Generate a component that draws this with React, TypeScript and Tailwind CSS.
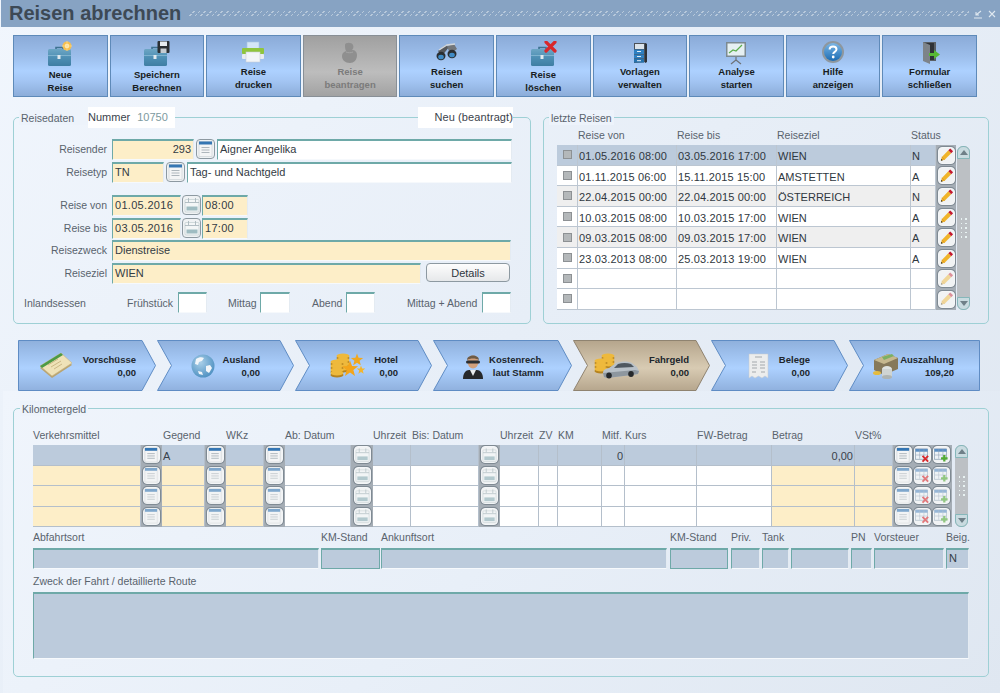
import React from "react";

const btnBg = "bg-[linear-gradient(180deg,#8babd8_0%,#9dbfec_35%,#add1ff_58%,#a3c5f3_75%,#8cadd9_100%)]";

function Case({ children }: { children?: React.ReactNode }) {
  return (
    <svg width="27" height="26" viewBox="0 0 27 26">
      <defs>
        <linearGradient id="cs" x1="0" y1="0" x2="0" y2="1">
          <stop offset="0" stopColor="#6da6c4" />
          <stop offset="0.5" stopColor="#4e8fb4" />
          <stop offset="1" stopColor="#3f7ea3" />
        </linearGradient>
      </defs>
      <path d="M9 9V6.5h7V9" fill="none" stroke="#3e7391" strokeWidth="1.6" />
      <rect x="1" y="8" width="23" height="17" rx="1.5" fill="url(#cs)" />
      <rect x="1" y="14" width="23" height="1" fill="#7fb3cf" />
      <rect x="10.5" y="14" width="3" height="4" fill="#dfe9ee" />
      {children}
    </svg>
  );
}

const NewIcon = () => (
  <Case>
    <circle cx="20" cy="5" r="4.5" fill="#f6bf4f" />
    <circle cx="20" cy="5" r="2.2" fill="#fff1c4" />
    <path d="M20 0v10M15 5h10" stroke="#fbd98a" strokeWidth="0.8" />
  </Case>
);
const SaveIcon = () => (
  <Case>
    <rect x="14.5" y="0" width="12" height="12" rx="1" fill="#2b2f33" />
    <rect x="17" y="0.5" width="7" height="4.5" fill="#e8edf1" />
    <rect x="17.5" y="7.5" width="6" height="4.5" fill="#c6ccd2" />
  </Case>
);
const DeleteIcon = () => (
  <Case>
    <path d="M16 1l9 9M25 1l-9 9" stroke="#d8272b" strokeWidth="3.2" strokeLinecap="round" />
  </Case>
);
const PrinterIcon = () => (
  <svg width="24" height="24" viewBox="0 0 24 24">
    <rect x="6" y="1" width="12" height="8" fill="#d5e6f6" stroke="#a9c5de" strokeWidth="0.6" />
    <rect x="1" y="7" width="22" height="6" rx="1" fill="#8fc53c" />
    <rect x="1" y="13" width="22" height="5" rx="1" fill="#e9edf0" />
    <rect x="5" y="11" width="14" height="10" fill="#f2f5f8" stroke="#c5ced6" strokeWidth="0.6" />
  </svg>
);
const HandIcon = () => (
  <svg width="24" height="24" viewBox="0 0 24 24">
    <path d="M7 4c0-3 7-3 8 0 1 2 0 4-1 5 3 0 5 2 5 5 0 5-3 8-7 8-5 0-8-3-8-7 0-3 2-4 4-5-1-2-1-4-1-6z" fill="#8f8f8f" />
    <path d="M8 11c2 1 5 1 7 0" stroke="#a5a5a5" strokeWidth="1" fill="none" />
  </svg>
);
const BinocularIcon = () => (
  <svg width="24" height="24" viewBox="0 0 24 24">
    <path d="M3 10l8-6 3 2-7 9z" fill="#55585c" />
    <path d="M12 5l7-2 3 5-7 5z" fill="#72767a" />
    <path d="M4 9l8-5 8-1" stroke="#d3d7da" strokeWidth="1.3" fill="none" />
    <ellipse cx="6" cy="15" rx="4.500" ry="4.200" fill="#2b2e31" />
    <ellipse cx="6" cy="16" rx="2.800" ry="2.300" fill="#3f8bc6" />
    <ellipse cx="17" cy="13" rx="4.500" ry="4.200" fill="#2b2e31" />
    <ellipse cx="17" cy="14" rx="2.800" ry="2.300" fill="#3f8bc6" />
  </svg>
);
const CabinetIcon = () => (
  <svg width="24" height="24" viewBox="0 0 24 24">
    <path d="M6 2h11l2 1v18l-13 1z" fill="#4b5158" />
    <path d="M17 2l2 1v18l-2 1z" fill="#2e3237" />
    <rect x="7" y="3" width="9" height="5" fill="#dbe3ea" />
    <rect x="6" y="8.500" width="10" height="4.500" fill="#2d7fc1" />
    <rect x="6" y="13.500" width="10" height="4" fill="#2d7fc1" />
    <rect x="6" y="18" width="10" height="3.600" fill="#2672ad" />
    <path d="M9 10.500h4M9 15.500h4M9 19.700h4" stroke="#e6eef5" strokeWidth="1" />
  </svg>
);
const ChartIcon = () => (
  <svg width="24" height="24" viewBox="0 0 24 24">
    <path d="M12 16v3l-5 4M12 19l5 4" stroke="#6d7276" strokeWidth="1.200" fill="none" />
    <rect x="2" y="1" width="20" height="15" fill="#7c8a91" />
    <rect x="3.500" y="2.500" width="17" height="12" fill="#e6f0f2" />
    <path d="M5 12l4-3 3 1 6-6" stroke="#5cae4d" strokeWidth="1.200" fill="none" />
  </svg>
);
const HelpIcon = () => (
  <svg width="24" height="24" viewBox="0 0 24 24" className="-mt-[1px]">
    <defs>
      <linearGradient id="hlp" x1="0" y1="0" x2="0" y2="1">
        <stop offset="0" stopColor="#7ab6e6" />
        <stop offset="1" stopColor="#1c6cb3" />
      </linearGradient>
    </defs>
    <circle cx="12" cy="12" r="11" fill="#8e979e" />
    <circle cx="12" cy="12" r="9" fill="url(#hlp)" />
    <path d="M8.600 9.400c0-2 1.600-3 3.500-3s3.400 1 3.400 2.800c0 2.800-3.300 2.500-3.300 4.800" fill="none" stroke="#fff" strokeWidth="2" />
    <circle cx="12.200" cy="17" r="1.400" fill="#fff" />
  </svg>
);
const DoorIcon = () => (
  <svg width="24" height="24" viewBox="0 0 24 24">
    <path d="M5 1h13v19H5z" fill="#5a6066" />
    <rect x="7" y="2" width="9" height="17" fill="#2f3338" />
    <path d="M5 1l7 3v19l-7-3z" fill="#7d8389" />
    <path d="M11 12h5V9l6 4.500-6 4.500v-3h-5z" fill="#57b935" />
  </svg>
);

const tools: { l: [string, string]; i: React.ReactNode; tall?: boolean; off?: boolean }[] = [
  { l: ["Neue", "Reise"], i: <NewIcon />, tall: true },
  { l: ["Speichern", "Berechnen"], i: <SaveIcon />, tall: true },
  { l: ["Reise", "drucken"], i: <PrinterIcon /> },
  { l: ["Reise", "beantragen"], i: <HandIcon />, off: true },
  { l: ["Reisen", "suchen"], i: <BinocularIcon /> },
  { l: ["Reise", "löschen"], i: <DeleteIcon />, tall: true },
  { l: ["Vorlagen", "verwalten"], i: <CabinetIcon /> },
  { l: ["Analyse", "starten"], i: <ChartIcon /> },
  { l: ["Hilfe", "anzeigen"], i: <HelpIcon /> },
  { l: ["Formular", "schließen"], i: <DoorIcon /> },
];

function Field({ className = "", children }: { className?: string; children?: React.ReactNode }) {
  return (
    <div
      className={
        "h-[21px] shrink-0 border-t-2 border-l border-t-[#6ea9a8] border-l-[#6ea9a8] border-r border-b border-r-[#e4ebf2] border-b-[#f6f9fc] text-[11px] leading-[17px] px-[2px] text-[#333b44] overflow-hidden whitespace-nowrap " +
        className
      }
    >
      {children}
    </div>
  );
}

const Lov = ({ dim }: { dim?: boolean }) => (
  <svg width="16" height="16" viewBox="0 0 16 16" className={dim ? "opacity-60" : ""}>
    <rect x="1" y="0.500" width="13" height="15" fill="#f4f5f6" stroke="#c8ced3" strokeWidth="0.600" />
    <rect x="1" y="0.500" width="13" height="3" fill="#3576b3" />
    <path d="M3.500 6.500h8M3.500 9h8M3.500 11.500h8" stroke="#aeb6bc" strokeWidth="1" />
  </svg>
);
const Cal = ({ dim }: { dim?: boolean }) => (
  <svg width="16" height="16" viewBox="0 0 16 16" className={dim ? "opacity-75" : ""}>
    <rect x="1" y="2.500" width="14" height="12.500" rx="1" fill="#f3f6f7" stroke="#b9c6ca" strokeWidth="0.600" />
    <rect x="2.500" y="9.500" width="11" height="4" fill="#9fbcc2" />
    <path d="M4.500 1v4M11.500 1v4M1 5.500h14" stroke="#aab8bd" strokeWidth="0.900" />
  </svg>
);
const Pencil = ({ dim }: { dim?: boolean }) => (
  <svg width="16" height="16" viewBox="0 0 16 16" className={dim ? "opacity-45" : ""}>
    <path d="M2 14l1-4 7-7 3 3-7 7z" fill="#f0b429" />
    <path d="M3 10l3 3" stroke="#d9902a" strokeWidth="0.800" />
    <path d="M10 3l2-2 3 3-2 2z" fill="#c4192f" />
    <path d="M2 14l.5-2 1.500 1.500z" fill="#2a2a2a" />
  </svg>
);
const DelRow = ({ dim }: { dim?: boolean }) => (
  <svg width="16" height="16" viewBox="0 0 16 16" className={dim ? "opacity-60" : ""}>
    <rect x="0.500" y="1.500" width="13" height="11" fill="#eef3f7" stroke="#7f96ac" strokeWidth="0.700" />
    <rect x="0.500" y="1.500" width="13" height="3" fill="#5b8fc4" />
    <path d="M5 2v10M9.500 2v10M1 8h12" stroke="#8ea3b6" strokeWidth="0.600" />
    <path d="M8 9l6 6M14 9l-6 6" stroke="#d8272b" strokeWidth="2" />
  </svg>
);
const AddRow = ({ dim }: { dim?: boolean }) => (
  <svg width="16" height="16" viewBox="0 0 16 16" className={dim ? "opacity-60" : ""}>
    <rect x="0.500" y="1.500" width="13" height="11" fill="#eef3f7" stroke="#7f96ac" strokeWidth="0.700" />
    <rect x="0.500" y="1.500" width="13" height="3" fill="#5b8fc4" />
    <path d="M5 2v10M9.500 2v10M1 8h12" stroke="#8ea3b6" strokeWidth="0.600" />
    <path d="M11 8v7M7.500 11.500h7" stroke="#52ab33" strokeWidth="2.400" />
  </svg>
);

function IconBtn({ children }: { children: React.ReactNode }) {
  return (
    <div className="w-[17px] h-[17px] shrink-0 rounded-[4px] border border-[#f4f6f8] bg-[#f1f3f4] shadow-[0_0_0_1px_#7f8a93] flex items-center justify-center">
      {children}
    </div>
  );
}
function FormBtn({ children }: { children: React.ReactNode }) {
  return (
    <div className="w-[19px] h-[20px] mx-[1px] shrink-0 rounded-[4px] border border-[#8d99a1] bg-[#eff2f4] flex items-center justify-center">
      {children}
    </div>
  );
}

function Lbl({ children, className = "" }: { children: React.ReactNode; className?: string }) {
  return <span className={"block text-[10.500px] leading-[14px] text-[#59636d] whitespace-nowrap " + className}>{children}</span>;
}

function FormRow({ label, className = "", children }: { label?: string; className?: string; children: React.ReactNode }) {
  return (
    <div className={"flex items-start h-[21px] " + className}>
      <div className="w-[93px] mr-[5px] text-right shrink-0">
        <Lbl className="leading-[20px]">{label}</Lbl>
      </div>
      {children}
    </div>
  );
}

function Legend({ children, className = "" }: { children: React.ReactNode; className?: string }) {
  return <div className={"absolute -top-[8px] bg-[#edf3fb] px-[2px] h-[15px] flex items-center " + className}>{children}</div>;
}

function ScrollBar({ className = "" }: { className?: string }) {
  const cap = "h-[13px] w-[13px] bg-[#c9dbe0] border border-[#86b7ba] flex items-center justify-center shrink-0";
  return (
    <div className={"w-[13px] flex flex-col bg-[#bcc0c4] rounded-[6px] " + className}>
      <div className={cap + " rounded-t-[6px]"}>
        <div className="w-0 h-0 border-x-[4px] border-x-transparent border-b-[5px] border-b-[#6f8088]" />
      </div>
      <div className="flex-1 flex flex-col items-center justify-center gap-[2px]">
        <div className="grid grid-cols-2 gap-x-[3px] gap-y-[3px]">
          {Array.from({ length: 10 }).map((_, i) => (
            <div key={i} className="w-[1.500px] h-[1.500px] bg-[#e8f2f2]" />
          ))}
        </div>
      </div>
      <div className={cap + " rounded-b-[6px]"}>
        <div className="w-0 h-0 border-x-[4px] border-x-transparent border-t-[5px] border-t-[#6f8088]" />
      </div>
    </div>
  );
}

const trips = [
  ["01.05.2016 08:00", "03.05.2016 17:00", "WIEN", "N", "bg-[#bccbdc]"],
  ["01.11.2015 06:00", "15.11.2015 15:00", "AMSTETTEN", "A", "bg-white"],
  ["22.04.2015 00:00", "22.04.2015 00:00", "ÖSTERREICH", "N", "bg-[#efefef]"],
  ["10.03.2015 08:00", "10.03.2015 17:00", "WIEN", "A", "bg-white"],
  ["09.03.2015 08:00", "09.03.2015 17:00", "WIEN", "A", "bg-[#efefef]"],
  ["23.03.2013 08:00", "25.03.2013 19:00", "WIEN", "A", "bg-white"],
  ["", "", "", "", "bg-white"],
  ["", "", "", "", "bg-white"],
];

const tripCell = "border-r border-b border-[#bcc6d1] text-[11px] leading-[22px] text-[#2f3740] px-[1px] overflow-hidden whitespace-nowrap";

const MoneyCardIcon = () => (
  <svg width="34" height="26" viewBox="0 0 34 26">
    <path d="M1 15L22 2l11 10-20 13z" fill="#b9a472" />
    <path d="M1 13L22 0l11 10-20 13z" fill="#efe2b8" stroke="#c7b37f" strokeWidth="0.600" />
    <path d="M1 13L22 0l2 2L3 15z" fill="#4d9a45" />
    <path d="M9 12l10-6M12 14l10-6M15 16l8-5" stroke="#c3ad78" strokeWidth="0.800" />
  </svg>
);
const GlobeIcon = () => (
  <svg width="24" height="24" viewBox="0 0 24 24">
    <defs>
      <radialGradient id="glb" cx="0.4" cy="0.35" r="0.8">
        <stop offset="0" stopColor="#a9cfe8" />
        <stop offset="1" stopColor="#3f86bb" />
      </radialGradient>
    </defs>
    <circle cx="12" cy="12" r="11.500" fill="url(#glb)" />
    <path d="M5 5c3-2 6-2 8-1l-2 3-3 1-1 3-3-1zM15 12l4-1 2 3-3 5-3-2zM7 17l4 1 1 3-4-1z" fill="#f2f6f9" />
  </svg>
);
const Coin = ({ x, y }: { x: number; y: number }) => (
  <g>
    <ellipse cx={x} cy={y + 2} rx="6.500" ry="2.600" fill="#b5831f" />
    <ellipse cx={x} cy={y} rx="6.500" ry="2.600" fill="#eeb93c" />
  </g>
);
const star = (cx: number, cy: number, r: number) => {
  const pts: string[] = [];
  for (let i = 0; i < 10; i++) {
    const rr = i % 2 ? r * 0.42 : r;
    const a = -Math.PI / 2 + (i * Math.PI) / 5;
    pts.push(`${cx + rr * Math.cos(a)},${cy + rr * Math.sin(a)}`);
  }
  return pts.join(" ");
};
const HotelIcon = () => (
  <svg width="37" height="26" viewBox="0 0 37 26">
    <Coin x={14} y={3} /><Coin x={14} y={7} /><Coin x={14} y={11} /><Coin x={14} y={15} />
    <Coin x={8} y={9} /><Coin x={8} y={13} /><Coin x={8} y={17} /><Coin x={8} y={20} />
    <polygon points={star(28, 7, 6.5)} fill="#f0a81f" />
    <polygon points={star(21, 16, 8.5)} fill="#f3a51b" />
    <polygon points={star(32, 17, 4.5)} fill="#f3b52d" />
  </svg>
);
const PersonIcon = () => (
  <svg width="22" height="26" viewBox="0 0 22 26">
    <path d="M1 26c0-6 3-9 6-9h8c3 0 6 3 6 9z" fill="#26282b" />
    <path d="M8 17l3 6 3-6z" fill="#e9ecef" />
    <ellipse cx="11" cy="9" rx="5.500" ry="6.500" fill="#d2a07c" />
    <path d="M5 7c0-6 12-6 12 0-3-2-9-2-12 0z" fill="#6e5b46" />
    <rect x="4" y="7.500" width="14" height="3" rx="1.500" fill="#2b2e32" />
  </svg>
);
const CarIcon = () => (
  <svg width="46" height="26" viewBox="0 0 46 26">
    <Coin x={14} y={3} /><Coin x={14} y={7} /><Coin x={14} y={11} />
    <Coin x={7} y={8} /><Coin x={7} y={12} /><Coin x={7} y={16} />
    <path d="M9 20c0-3 2-4 6-5l7-5c6-2 12-2 16 0l5 4 2 4-1 3-6 1-25 3-3-1z" fill="#b9c1c8" />
    <path d="M9 20l32-3 4 1-1 3-6 1-25 3-3-1z" fill="#8e979f" />
    <path d="M24 11c4-1.500 9-1.500 13 0l3 3-20 1z" fill="#4f5860" />
    <ellipse cx="15" cy="22.500" rx="2.800" ry="3" fill="#26292c" />
    <ellipse cx="37" cy="21" rx="2.800" ry="3" fill="#26292c" />
  </svg>
);
const ReceiptIcon = () => (
  <svg width="21" height="26" viewBox="0 0 21 26">
    <path d="M1 1h19v24l-3-2-3 2-3.500-2-3.500 2-3-2-3 2z" fill="#eceded" stroke="#c6cacc" strokeWidth="0.500" />
    <path d="M7 4h7M4 9h5M12 9h5M4 12h5M12 12h5M4 15h5M12 15h5M4 19h4M13 19h4" stroke="#a3a8ac" strokeWidth="1" />
  </svg>
);
const CashIcon = () => (
  <svg width="26" height="26" viewBox="0 0 26 26">
    <path d="M1 7l14-6 10 4v11L11 22 1 17z" fill="#86795a" />
    <path d="M1 7l14-6 10 4-14 6z" fill="#c6b88e" />
    <path d="M9 4l10-3 2 2-10 4z" fill="#7cb063" />
    <ellipse cx="14" cy="16" rx="5" ry="3" fill="#dfe3e1" />
    <rect x="9" y="16" width="10" height="8" fill="#cfd4d2" />
    <ellipse cx="14" cy="24" rx="5" ry="2" fill="#aeb4b2" />
    <ellipse cx="4" cy="20" rx="4" ry="2" fill="#e5bb3f" />
  </svg>
);

const steps: { a: string; b: string; i: React.ReactNode; w: number; box: string; pl: string; pr: string; active?: boolean; first?: boolean; last?: boolean }[] = [
  { a: "Vorschüsse", b: "0,00", i: <MoneyCardIcon />, w: 139, box: "w-[139px]", pl: "pl-[21px]", pr: "pr-[21px]", first: true },
  { a: "Ausland", b: "0,00", i: <GlobeIcon />, w: 138, box: "w-[138px]", pl: "pl-[34px]", pr: "pr-[35px]" },
  { a: "Hotel", b: "0,00", i: <HotelIcon />, w: 138, box: "w-[138px]", pl: "pl-[34px]", pr: "pr-[35px]" },
  { a: "Kostenrech.", b: "laut Stamm", i: <PersonIcon />, w: 140, box: "w-[140px]", pl: "pl-[29px]", pr: "pr-[29px]" },
  { a: "Fahrgeld", b: "0,00", i: <CarIcon />, w: 138, box: "w-[138px]", pl: "pl-[21px]", pr: "pr-[22px]", active: true },
  { a: "Belege", b: "0,00", i: <ReceiptIcon />, w: 138, box: "w-[138px]", pl: "pl-[37px]", pr: "pr-[39px]" },
  { a: "Auszahlung", b: "109,20", i: <CashIcon />, w: 132, box: "w-[132px]", pl: "pl-[24px]", pr: "pr-[27px]", last: true },
];

function Step({ s, id }: { s: (typeof steps)[number]; id: string }) {
  const w = s.w - 1;
  const right = s.last ? `${w - 0.5},0.5 ${w - 0.5},50.5` : `${w - 14},0.5 ${w - 0.5},25.5 ${w - 14},50.5`;
  const pts = s.first ? `0.5,0.5 ${right} 0.5,50.5` : `0.5,0.5 ${right} 0.5,50.5 14.5,25.5`;
  return (
    <div className={"relative h-[51px] shrink-0 " + s.box}>
      <svg width={w} height="51" className="absolute left-0 top-0">
        <defs>
          <linearGradient id={id} x1="0" y1="0" x2="0" y2="1">
            {s.active ? (
              <>
                <stop offset="0" stopColor="#b5a58c" />
                <stop offset="0.55" stopColor="#d8cbb3" />
                <stop offset="1" stopColor="#b6a68d" />
              </>
            ) : (
              <>
                <stop offset="0" stopColor="#8fb0dc" />
                <stop offset="0.55" stopColor="#add1ff" />
                <stop offset="1" stopColor="#90b1de" />
              </>
            )}
          </linearGradient>
        </defs>
        <polygon points={pts} fill={`url(#${id})`} stroke={s.active ? "#8f8370" : "#5f8cc4"} strokeWidth="1" />
      </svg>
      <div className={"relative h-full flex items-center justify-between " + s.pl + " " + s.pr}>
        <div className="flex items-center">{s.i}</div>
        <div className="pt-[2px] text-right text-[9.500px] leading-[12.500px] font-bold text-[#20262c] whitespace-nowrap">
          <div>{s.a}</div>
          <div>{s.b}</div>
        </div>
      </div>
    </div>
  );
}

const kmCols = "grid grid-cols-[108px_21px_43px_21px_38px_21px_66px_22px_38px_68px_21px_39px_19px_44px_23px_72px_75px_83px_38px_59px]";
const kmCell = "border-r border-b border-[#b4bfcb] h-[20.500px] text-[11px] leading-[22px] text-[#3a424b] px-[1px] overflow-hidden whitespace-nowrap";
const kmBtn = "bg-[#a5adb5] h-[20.500px] border-b border-[#a5adb5] flex items-center justify-center";

function KmRow({ first }: { first?: boolean }) {
  const c = first ? "bg-[#bccbdc]" : "bg-[#fdeec8]";
  const w = first ? "bg-[#bccbdc]" : "bg-white";
  const dim = !first;
  return (
    <>
      <div className={kmCell + " " + c} />
      <div className={kmBtn}><IconBtn><Lov dim={dim} /></IconBtn></div>
      <div className={kmCell + " " + c}>{first ? "A" : ""}</div>
      <div className={kmBtn}><IconBtn><Lov dim={dim} /></IconBtn></div>
      <div className={kmCell + " " + c} />
      <div className={kmBtn}><IconBtn><Lov dim={dim} /></IconBtn></div>
      <div className={kmCell + " " + w} />
      <div className={kmBtn}><IconBtn><Cal dim /></IconBtn></div>
      <div className={kmCell + " " + w} />
      <div className={kmCell + " " + w} />
      <div className={kmBtn}><IconBtn><Cal dim /></IconBtn></div>
      <div className={kmCell + " " + w} />
      <div className={kmCell + " " + w} />
      <div className={kmCell + " " + w} />
      <div className={kmCell + " text-right " + w}>{first ? "0" : ""}</div>
      <div className={kmCell + " " + w} />
      <div className={kmCell + " " + w} />
      <div className={kmCell + " text-right " + c}>{first ? "0,00" : ""}</div>
      <div className={kmCell + " " + c} />
      <div className={kmBtn + " gap-[2px]"}>
        <IconBtn><Lov dim={dim} /></IconBtn>
        <IconBtn><DelRow dim={dim} /></IconBtn>
        <IconBtn><AddRow dim={dim} /></IconBtn>
      </div>
    </>
  );
}

const grayField = "bg-[#bccbdc] w-auto";

export default function App() {
  return (
    <div className="relative w-[1000px] h-[693px] overflow-hidden font-['Liberation_Sans',Arial,sans-serif] bg-[linear-gradient(135deg,#f1f6fd_0%,#e7eef7_50%,#dee6f0_100%)]">
      {/* title bar */}
      <div className="h-[27px] ml-[1px] bg-[#87a3c3] flex items-center pl-[8px] pr-[3px]">
        <span className="text-[20px] leading-[27px] font-bold text-[#3d4955] whitespace-nowrap">Reisen abrechnen</span>
        <div className="ml-[8px] flex-1 h-[7px] [background-image:repeating-linear-gradient(0deg,#87a3c3_0px,#87a3c3_1px,transparent_1px,transparent_3px),repeating-linear-gradient(135deg,#b8c9db_0px,#b8c9db_1px,transparent_1px,transparent_4px)]" />
        <div className="ml-[4px] flex items-center gap-[4px] text-[#dfe8f0]">
          <svg width="10" height="10" viewBox="0 0 10 10"><path d="M1 9h8M8 2L3 6M3 3v3h3" stroke="currentColor" strokeWidth="1.100" fill="none" /></svg>
          <svg width="10" height="10" viewBox="0 0 10 10"><path d="M2 2l6 6M8 2l-6 6" stroke="currentColor" strokeWidth="1.100" /></svg>
        </div>
      </div>

      {/* toolbar */}
      <div className="mt-[8px] ml-[13px] w-[964px] h-[62px] grid grid-cols-10 gap-[2px]">
        {tools.map((t) => (
          <div
            key={t.l[1]}
            className={
              "border pt-[5px] flex flex-col items-center text-center " +
              (t.off
                ? "border-[#888f96] bg-[linear-gradient(180deg,#a0a0a0_0%,#bdbdbd_60%,#a2a2a2_100%)] text-[#7b7b7b]"
                : "border-[#5e8ab9] text-[#181d22] " + btnBg)
            }
          >
            <div className={"flex items-start justify-center " + (t.tall ? "h-[28px]" : "h-[25px]")}>{t.i}</div>
            <div className="text-[9.500px] leading-[12.500px] font-bold whitespace-nowrap">
              <div>{t.l[0]}</div>
              <div>{t.l[1]}</div>
            </div>
          </div>
        ))}
      </div>

      {/* upper panels */}
      <div className="mt-[20px] ml-[13px] flex gap-[12px] h-[207px]">
        <div className="relative w-[518px] border border-[#9ed0d5] rounded-[5px] pt-[21px]">
          <Legend className="left-[5px] pr-[18px]"><Lbl>Reisedaten</Lbl></Legend>
          <div className="absolute -top-[11px] left-[74px] w-[87px] h-[21px] bg-white flex items-center gap-[7px] text-[11px] leading-[21px] whitespace-nowrap text-[#3a424b]">
            <span>Nummer</span><span className="text-[#7d9aa0]">10750</span>
          </div>
          <div className="absolute -top-[11px] left-[404px] w-[95px] h-[21px] bg-white text-right text-[11px] tracking-[0.1px] leading-[21px] text-[#3a424b] whitespace-nowrap">
            Neu (beantragt)
          </div>

          <FormRow label="Reisender">
            <Field className="w-[82px] bg-[#fdeec8] text-right">293</Field>
            <div className="ml-[1px] mr-[1px]"><FormBtn><Lov /></FormBtn></div>
            <Field className="w-[295px] bg-white">Aigner Angelika</Field>
          </FormRow>
          <FormRow label="Reisetyp" className="mt-[2px]">
            <Field className="w-[52px] bg-[#fdeec8]">TN</Field>
            <div className="ml-[1px] mr-[1px]"><FormBtn><Lov /></FormBtn></div>
            <Field className="w-[325px] bg-white">Tag- und Nachtgeld</Field>
          </FormRow>
          <FormRow label="Reise von" className="mt-[12px]">
            <Field className="w-[69px] bg-[#fdeec8] tracking-[0.3px]">01.05.2016</Field>
            <FormBtn><Cal /></FormBtn>
            <Field className="w-[46px] bg-[#fdeec8] tracking-[0.3px]">08:00</Field>
          </FormRow>
          <FormRow label="Reise bis" className="mt-[2px]">
            <Field className="w-[69px] bg-[#fdeec8] tracking-[0.3px]">03.05.2016</Field>
            <FormBtn><Cal /></FormBtn>
            <Field className="w-[46px] bg-[#fdeec8] tracking-[0.3px]">17:00</Field>
          </FormRow>
          <FormRow label="Reisezweck" className="mt-[1px]">
            <Field className="w-[399px] bg-[#fdeec8]">Dienstreise</Field>
          </FormRow>
          <FormRow label="Reiseziel" className="mt-[2px]">
            <Field className="w-[309px] bg-[#fdeec8]">WIEN</Field>
            <div className="ml-[5px] w-[84px] h-[19px] rounded-[4px] border border-[#8d99a1] bg-[linear-gradient(180deg,#fdfdfd,#e6e8ea)] text-center text-[11px] leading-[18px] text-[#2f3740]">
              Details
            </div>
          </FormRow>
          <div className="mt-[8px] flex items-center h-[21px] pl-[10px]">
            <Lbl className="w-[103px]">Inlandsessen</Lbl>
            <Lbl className="w-[46px]">Frühstück</Lbl>
            <Field className="ml-[5px] w-[29px] bg-white" />
            <Lbl className="ml-[21px] w-[28px]">Mittag</Lbl>
            <Field className="ml-[4px] w-[30px] bg-white" />
            <Lbl className="ml-[22px] w-[29px]">Abend</Lbl>
            <Field className="ml-[5px] w-[29px] bg-white" />
            <Lbl className="ml-[32px] w-[70px]">Mittag + Abend</Lbl>
            <Field className="ml-[5px] w-[29px] bg-white" />
          </div>
        </div>

        <div className="relative w-[446px] border border-[#9ed0d5] rounded-[5px] pt-[10px] pl-[13px]">
          <Legend className="left-[5px]"><Lbl>letzte Reisen</Lbl></Legend>
          <div className="grid grid-cols-[21px_99px_100px_134px_25px_20px] h-[17px]">
            <div />
            <Lbl>Reise von</Lbl>
            <Lbl>Reise bis</Lbl>
            <Lbl>Reiseziel</Lbl>
            <Lbl>Status</Lbl>
          </div>
          <div className="flex">
            <div className="w-[399px] grid grid-cols-[21px_99px_100px_134px_25px_20px] auto-rows-[20.600px]">
              {trips.map((r, i) => (
                <React.Fragment key={i}>
                  <div className={tripCell + " flex items-center justify-center " + r[4]}>
                    <div className="w-[9px] h-[9px] bg-[#b4b8ba] border border-[#8d9194]" />
                  </div>
                  <div className={tripCell + " tracking-[0.15px] " + r[4]}>{r[0]}</div>
                  <div className={tripCell + " tracking-[0.15px] " + r[4]}>{r[1]}</div>
                  <div className={tripCell + " " + r[4]}>{r[2]}</div>
                  <div className={tripCell + " " + r[4]}>{r[3]}</div>
                  <div className="bg-[#a5adb5] flex items-center justify-center">
                    <IconBtn><Pencil dim={i > 5} /></IconBtn>
                  </div>
                </React.Fragment>
              ))}
            </div>
            <ScrollBar className="ml-[1px] h-[164px] mt-[1px]" />
          </div>
        </div>
      </div>

      {/* process steps */}
      <div className="mt-[16px] ml-[18px] flex">
        {steps.map((s, i) => (
          <Step key={s.a} s={s} id={"stp" + i} />
        ))}
      </div>

      {/* lower section */}
      <div className="ml-[3px] h-[302px] pl-[10px] pt-[17px] bg-[linear-gradient(135deg,#f0f5fc_0%,#e8eff8_50%,#dfe7f1_100%)]">
        <div className="relative w-[976px] h-[269px] border border-[#9ed0d5] rounded-[5px] pt-[19px] pl-[19px]">
          <Legend className="left-[6px]"><Lbl>Kilometergeld</Lbl></Legend>
          <div className={kmCols + " h-[17px]"}>
            <Lbl className="col-span-2">Verkehrsmittel</Lbl>
            <Lbl className="col-span-2 pl-[1px]">Gegend</Lbl>
            <Lbl className="col-span-2">WKz</Lbl>
            <Lbl className="col-span-2">Ab: Datum</Lbl>
            <Lbl>Uhrzeit</Lbl>
            <Lbl className="col-span-2 pl-[1px]">Bis: Datum</Lbl>
            <Lbl>Uhrzeit</Lbl>
            <Lbl>ZV</Lbl>
            <Lbl>KM</Lbl>
            <Lbl>Mitf.</Lbl>
            <Lbl>Kurs</Lbl>
            <Lbl>FW-Betrag</Lbl>
            <Lbl>Betrag</Lbl>
            <Lbl>VSt%</Lbl>
          </div>
          <div className="flex">
            <div className={kmCols}>
              <KmRow first />
              <KmRow />
              <KmRow />
              <KmRow />
            </div>
            <ScrollBar className="ml-[3px] h-[82px]" />
          </div>

          <div className="mt-[3px] grid grid-cols-[288px_60px_289px_61px_31px_29px_60px_23px_72px_23px]">
            <Lbl>Abfahrtsort</Lbl>
            <Lbl>KM-Stand</Lbl>
            <Lbl>Ankunftsort</Lbl>
            <Lbl>KM-Stand</Lbl>
            <Lbl>Priv.</Lbl>
            <Lbl>Tank</Lbl>
            <div />
            <Lbl>PN</Lbl>
            <Lbl>Vorsteuer</Lbl>
            <Lbl>Beig.</Lbl>
            <Field className={grayField + " mt-[4px] mr-[2px]"} />
            <Field className={grayField + " mt-[4px] mr-[1px] !border-[#6ea9a8]"} />
            <Field className={grayField + " mt-[4px] mr-[3px]"} />
            <Field className={grayField + " mt-[4px] mr-[3px] !border-[#6ea9a8]"} />
            <Field className={grayField + " mt-[4px] mr-[2px]"} />
            <Field className={grayField + " mt-[4px] mr-[2px]"} />
            <Field className={grayField + " mt-[4px] mr-[2px]"} />
            <Field className={grayField + " mt-[4px] mr-[2px]"} />
            <Field className={grayField + " mt-[4px] mr-[2px]"} />
            <Field className={grayField + " mt-[4px]"}>N</Field>
          </div>

          <Lbl className="mt-[5px]">Zweck der Fahrt / detaillierte Route</Lbl>
          <Field className="mt-[4px] w-[936px] !h-[67px] bg-[#bccbdc]" />
        </div>
      </div>
    </div>
  );
}
